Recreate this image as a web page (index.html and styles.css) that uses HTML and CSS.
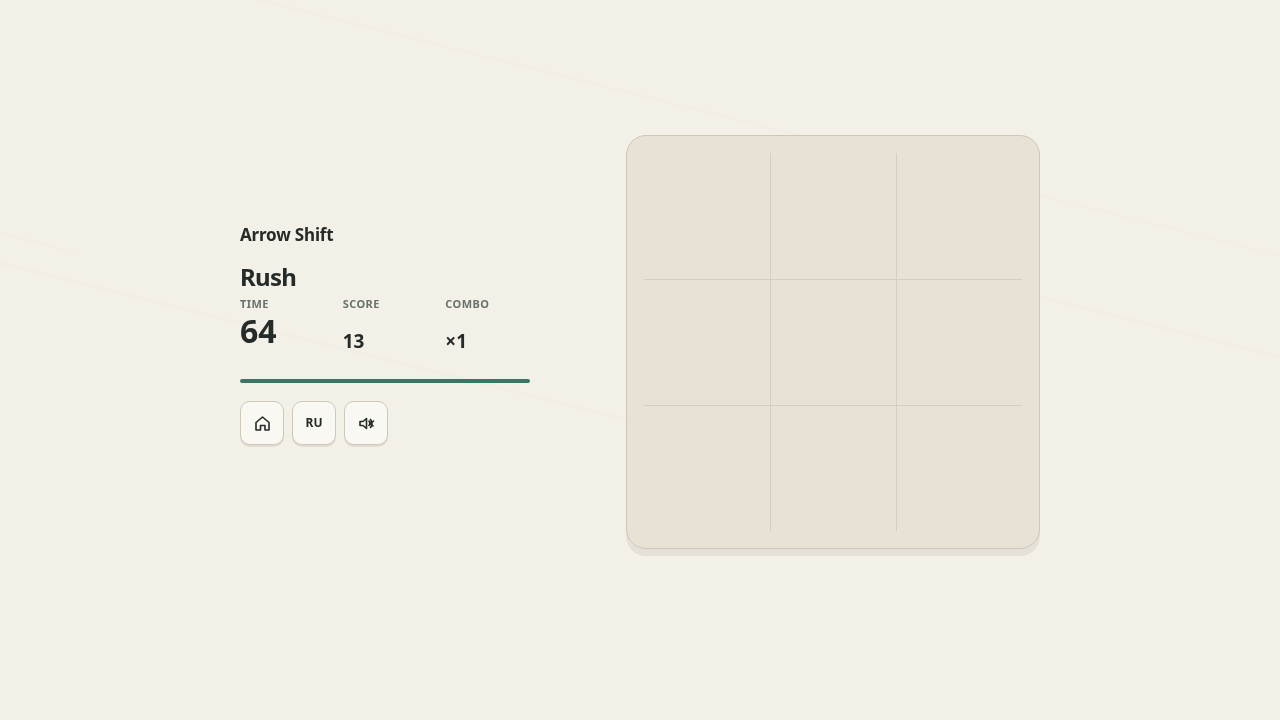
FILE: index.html
```html
<!DOCTYPE html>
<html lang="en">
<head>
<meta charset="utf-8">
<meta name="viewport" content="width=device-width, initial-scale=1">
<title>Arrow Shift</title>
<link rel="stylesheet" href="styles.css">
</head>
<body>
<svg class="backdrop" viewBox="0 0 1280 720" preserveAspectRatio="xMidYMid slice" aria-hidden="true">
  <path d="M258 0 1280 256M0 233 80 254M0 263 640 423M720 217 1280 357"/>
</svg>
<main class="game">
  <section class="panel">
    <h1 class="brand">Arrow Shift</h1>
    <h2 class="mode">Rush</h2>
    <dl class="stats">
      <div class="stat"><dt>TIME</dt><dd class="time">64</dd></div>
      <div class="stat"><dt>SCORE</dt><dd>13</dd></div>
      <div class="stat"><dt>COMBO</dt><dd>×1</dd></div>
    </dl>
    <div class="timer"></div>
    <div class="actions">
      <button class="btn" type="button" aria-label="Home"><svg class="icon" viewBox="0 0 20 20"><path d="M4 9.500 10.500 4 17 9.500V17h-4v-4.500H8.500V17H4z"/></svg></button>
      <button class="btn" type="button">RU</button>
      <button class="btn" type="button" aria-label="Sound"><svg class="icon" viewBox="0 0 20 20"><path d="M4 8.500v4h3l3.500 3v-10L7 8.500zM13 8l4 5M17.500 8l-4.500 4.500M13 8q2 2.500 0 4.500M14.500 6.500q3 4 0 8"/></svg></button>
    </div>
  </section>
  <section class="board" aria-label="Board">
    <div class="grid">
      <i></i><i></i><i></i><i></i><i></i><i></i><i></i><i></i><i></i>
    </div>
  </section>
</main>
</body>
</html>
```
FILE: styles.css
```css
* { box-sizing: border-box; }
body {
  margin: 0;
  min-height: 100vh;
  display: flex;
  align-items: center;
  justify-content: center;
  color: #252b28;
  background: radial-gradient(circle at 149px 12px, #efece4 0, transparent 2px) 0 0 / 220px 220px, #f3f0e7;
  font-family: "Noto Sans", sans-serif;
}
.backdrop {
  position: fixed;
  inset: 0;
  width: 100%;
  height: 100%;
  z-index: -1;
  fill: none;
  stroke: #f2eee6;
  stroke-width: 3;
}
.game {
  width: 100%;
  max-width: 832px;
  padding: 0 16px 36px;
  display: grid;
  grid-template-columns: 290px minmax(0, 414px);
  justify-content: space-between;
  align-items: center;
}
.panel { padding-bottom: 16px; }
h1, h2, dl, dd { margin: 0; }
.brand { font-size: 17px; line-height: 24px; letter-spacing: -0.01em; }
.mode { margin-top: 14px; font-size: 24px; line-height: 32px; letter-spacing: -0.03em; }
.stats { display: grid; grid-template-columns: repeat(3, 1fr); gap: 18px; margin-top: 4px; }
.stat { display: flex; flex-direction: column; justify-content: space-between; }
dt { font-size: 11px; line-height: 14px; font-weight: 700; letter-spacing: 0.04em; color: #69736d; }
dd { font-size: 19px; line-height: 28px; font-weight: 700; }
.time { font-size: 32px; line-height: 40px; margin-bottom: 4px; }
.timer { height: 4px; margin-top: 24px; border-radius: 2px; background: #3d7467; }
.actions { display: flex; gap: 8px; margin-top: 18px; }
.btn {
  width: 44px;
  height: 44px;
  padding: 0;
  display: grid;
  place-items: center;
  border: 1px solid #d0c8b8;
  border-radius: 10px;
  background: #faf8f3;
  box-shadow: 0 2px 0 #e0dcd2;
  color: inherit;
  font: 700 12px/16px "Noto Sans", sans-serif;
}
.icon {
  width: 20px;
  height: 20px;
  fill: none;
  stroke: currentColor;
  stroke-width: 1.6;
  stroke-linejoin: round;
  stroke-linecap: round;
}
.board {
  aspect-ratio: 1;
  padding: 17px;
  border: 1px solid #cec6b7;
  border-radius: 20px;
  background: #e8e1d6;
  box-shadow: 0 7px 0 #e5e1d8;
}
.grid { height: 100%; display: grid; grid-template: repeat(3, 1fr) / repeat(3, 1fr); }
.grid i { border: 0 solid #d2cec3; border-width: 1px 0 0 1px; }
.grid i:nth-child(3n + 1) { border-left-width: 0; }
.grid i:nth-child(-n + 3) { border-top-width: 0; }
```
